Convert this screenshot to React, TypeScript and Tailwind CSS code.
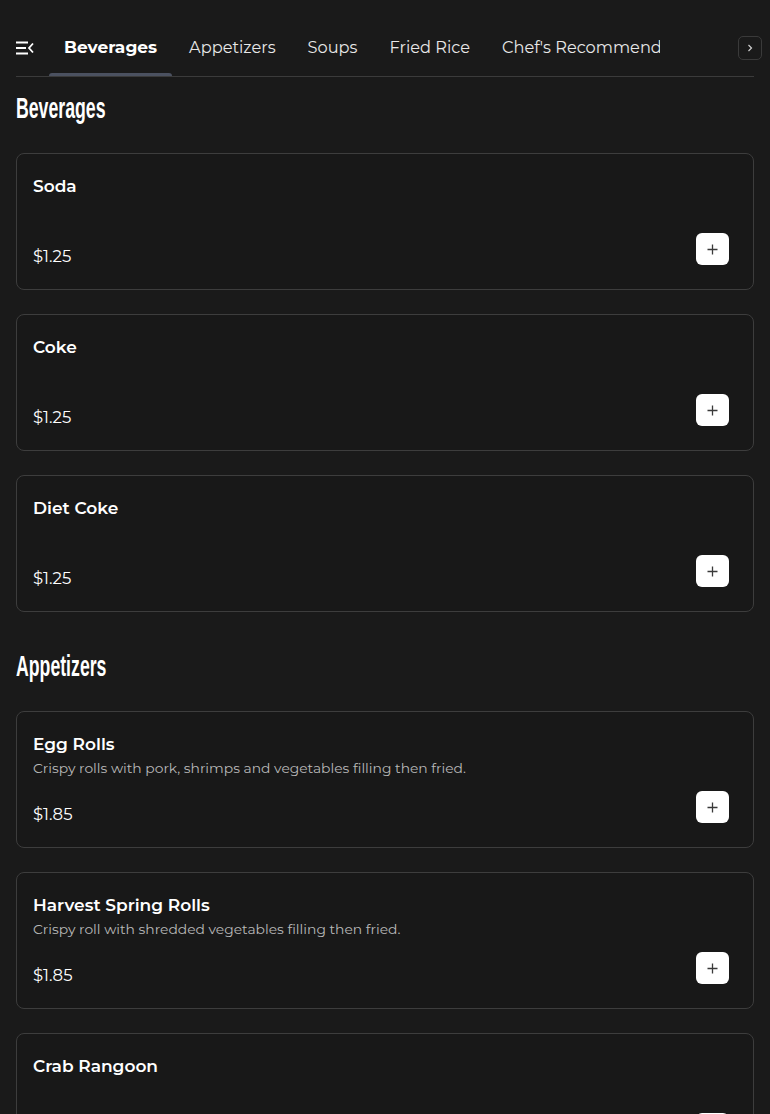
import React from "react";

type Item = { name: string; desc?: string; price: string };

const sections: { title: string; items: Item[] }[] = [
  {
    title: "Beverages",
    items: [
      { name: "Soda", price: "$1.25" },
      { name: "Coke", price: "$1.25" },
      { name: "Diet Coke", price: "$1.25" },
    ],
  },
  {
    title: "Appetizers",
    items: [
      { name: "Egg Rolls", desc: "Crispy rolls with pork, shrimps and vegetables filling then fried.", price: "$1.85" },
      { name: "Harvest Spring Rolls", desc: "Crispy roll with shredded vegetables filling then fried.", price: "$1.85" },
      { name: "Crab Rangoon", price: "$1.85" },
    ],
  },
];

const tabs = ["Beverages", "Appetizers", "Soups", "Fried Rice", "Chef's Recommendations", "Lunch Specials"];

function Card({ item }: { item: Item }) {
  return (
    <div className="h-[137px] rounded-lg border border-[#3d3d3d] bg-[#181818] px-4 pt-4 flex flex-col">
      <div className="h-8 leading-8 text-[17px] font-semibold text-white whitespace-nowrap">{item.name}</div>
      <div className="h-4 leading-4 text-[13.85px] text-[#b8b8b8] whitespace-nowrap">{item.desc ?? ""}</div>
      <div className="mt-[15px] flex justify-between items-end">
        <div className="leading-6 text-[16.5px] text-white pb-[5px]">{item.price}</div>
        <button className="mb-2 mr-2 w-[33px] h-8 rounded-md bg-white flex items-center justify-center">
          <svg width="11" height="11" viewBox="0 0 11 11">
            <path d="M5.5 0.5v10M0.5 5.5h10" stroke="#3a3a3a" strokeWidth="1.3" />
          </svg>
        </button>
      </div>
    </div>
  );
}

export default function App() {
  return (
    <div
      className="min-h-[1114px] bg-[#1a1a1a] text-white"
      style={{ fontFamily: "Montserrat, 'Open Sans', 'Noto Sans', sans-serif" }}
    >
      <div className="px-4">
        <div className="h-[77px] border-b border-[#3b3b3b] flex items-stretch">
          <div className="flex items-center pt-[19px] shrink-0">
            <svg width="18" height="14" viewBox="0 0 18 14">
              <path d="M0 1.5h12M0 7h10M0 12.5h12" stroke="#fff" strokeWidth="1.8" />
              <path d="M17 2.5L13 7l4 4.5" stroke="#fff" strokeWidth="1.8" fill="none" />
            </svg>
          </div>
          <div className="ml-[15px] w-[611px] overflow-hidden flex gap-[2px]">
            {tabs.map((t, i) => (
              <div key={t} className="relative px-[15px] pt-[19px] flex items-center shrink-0">
                <span
                  className={
                    "whitespace-nowrap " +
                    (i === 0 ? "text-[17px] font-bold text-white" : "text-[16.2px] text-[#e8e8e8]")
                  }
                >
                  {t}
                </span>
                {i === 0 && (
                  <div className="absolute left-0 right-0 bottom-0 h-[3px] rounded-t bg-[#4b5160]" />
                )}
              </div>
            ))}
          </div>
          <div className="ml-auto -mr-2 pt-[19px] flex items-center">
            <div className="w-6 h-6 rounded-[5px] border border-[#3a3a3a] flex items-center justify-center">
              <svg width="6" height="8" viewBox="0 0 6 8">
                <path d="M1.5 1l3 3-3 3" stroke="#cfcfcf" strokeWidth="1.2" fill="none" />
              </svg>
            </div>
          </div>
        </div>

        {sections.map((s, si) => (
          <section key={s.title} className={si === 0 ? "pt-[11px]" : "pt-[34px]"}>
            <h2
              className="h-10 leading-10 text-[29px] font-bold text-white mb-[25px] origin-left scale-x-[0.61] whitespace-nowrap"
              style={{ fontFamily: "'Liberation Sans', Arial, sans-serif" }}
            >
              {s.title}
            </h2>
            <div className="flex flex-col gap-6">
              {s.items.map((it) => (
                <Card key={it.name} item={it} />
              ))}
            </div>
          </section>
        ))}
      </div>
    </div>
  );
}
